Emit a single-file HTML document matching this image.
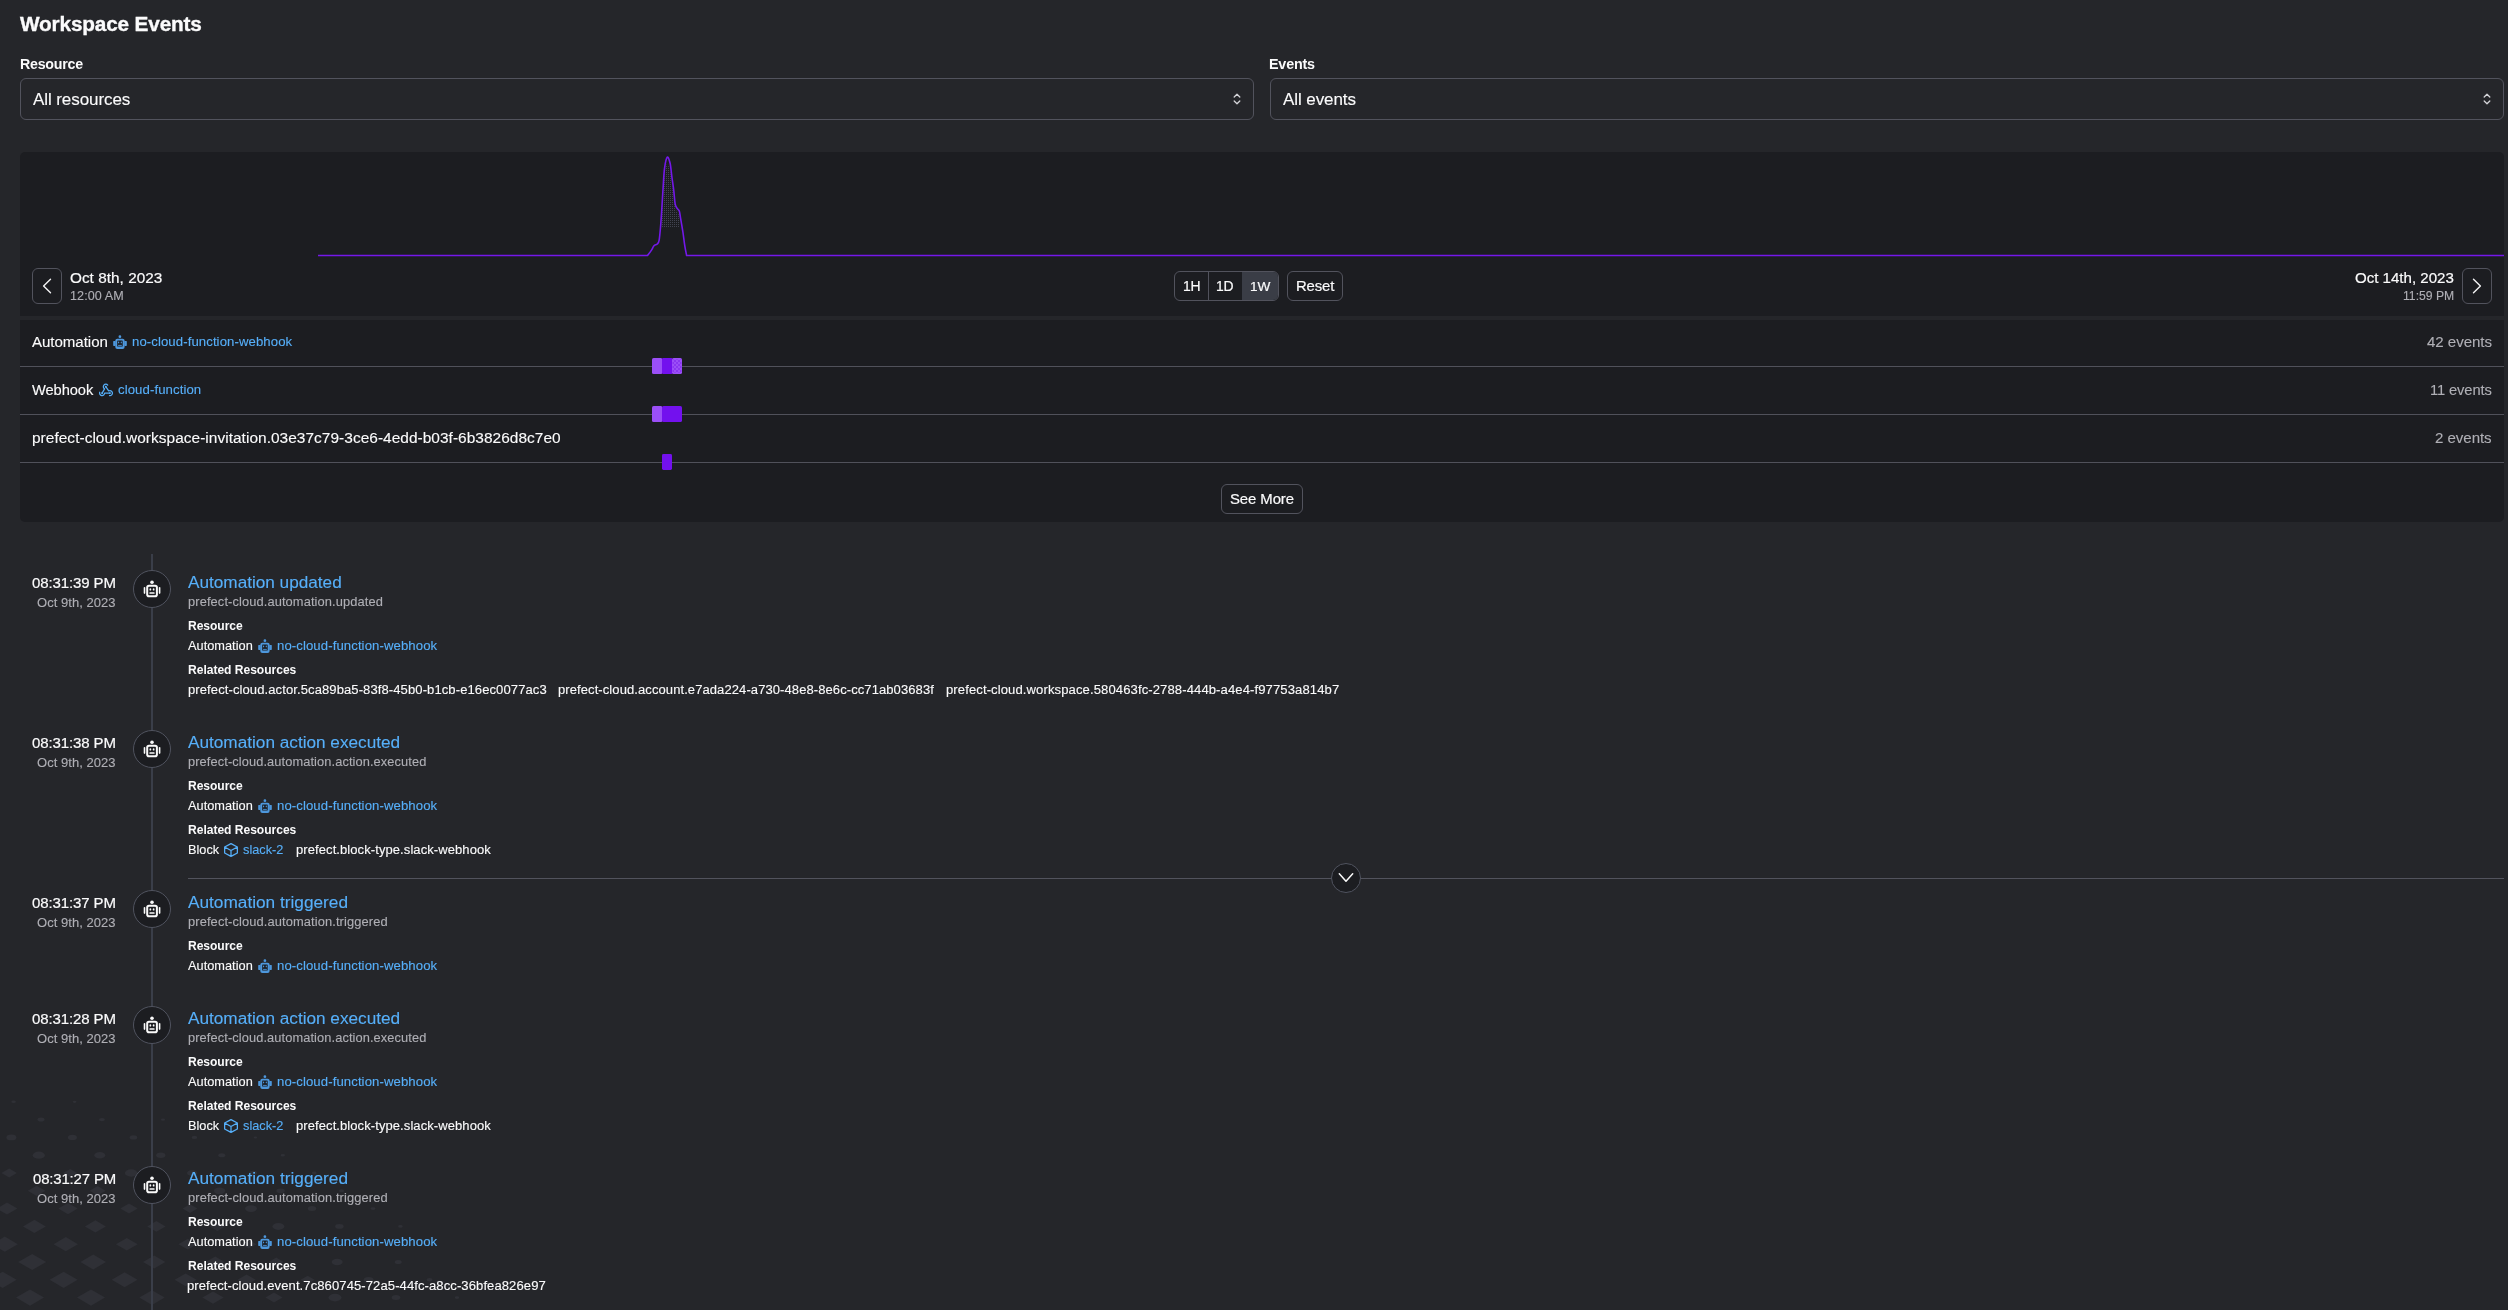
<!DOCTYPE html>
<html><head><meta charset="utf-8"><title>Workspace Events</title>
<style>
html,body{margin:0;padding:0;}
body{width:2508px;height:1310px;overflow:hidden;position:relative;background:#25262a;font-family:"Liberation Sans",sans-serif;}
.t{position:absolute;white-space:nowrap;will-change:transform;}
</style></head><body>
<svg style="position:absolute;left:0;top:0" width="900" height="1310" viewBox="0 0 900 1310"><g fill="#2f3036"><path d="M-45.0 1297.6L-31.0 1289.5L-17.0 1297.6L-31.0 1305.7Z"/><path d="M16.0 1297.6L30.0 1289.5L44.0 1297.6L30.0 1305.7Z"/><path d="M77.0 1297.6L91.0 1289.5L105.0 1297.6L91.0 1305.7Z"/><path d="M139.3 1297.6L152.0 1290.2L164.7 1297.6L152.0 1305.0Z"/><path d="M202.3 1297.6L213.0 1291.4L223.7 1297.6L213.0 1303.8Z"/><path d="M265.4 1297.6L274.0 1292.6L282.6 1297.6L274.0 1302.6Z"/><ellipse cx="335.0" cy="1297.6" rx="6.5" ry="3.8"/><ellipse cx="396.0" cy="1297.6" rx="4.3" ry="2.5"/><ellipse cx="457.0" cy="1297.6" rx="2.2" ry="1.3"/><path d="M-72.4 1279.8L-58.4 1271.7L-44.4 1279.8L-58.4 1287.9Z"/><path d="M-11.4 1279.8L2.6 1271.7L16.6 1279.8L2.6 1287.9Z"/><path d="M49.6 1279.8L63.6 1271.7L77.6 1279.8L63.6 1287.9Z"/><path d="M111.7 1279.8L124.6 1272.3L137.5 1279.8L124.6 1287.3Z"/><path d="M174.6 1279.8L185.6 1273.4L196.6 1279.8L185.6 1286.2Z"/><path d="M237.5 1279.8L246.6 1274.5L255.7 1279.8L246.6 1285.1Z"/><path d="M300.6 1279.8L307.6 1275.7L314.6 1279.8L307.6 1283.9Z"/><ellipse cx="368.6" cy="1279.8" rx="5.0" ry="2.9"/><ellipse cx="429.6" cy="1279.8" rx="2.9" ry="1.7"/><path d="M-42.8 1262.0L-28.8 1253.9L-14.8 1262.0L-28.8 1270.1Z"/><path d="M18.2 1262.0L32.2 1253.9L46.2 1262.0L32.2 1270.1Z"/><path d="M80.4 1262.0L93.2 1254.6L106.0 1262.0L93.2 1269.4Z"/><path d="M143.0 1262.0L154.2 1255.5L165.4 1262.0L154.2 1268.5Z"/><path d="M205.8 1262.0L215.2 1256.5L224.6 1262.0L215.2 1267.5Z"/><path d="M268.7 1262.0L276.2 1257.6L283.7 1262.0L276.2 1266.4Z"/><ellipse cx="337.2" cy="1262.0" rx="5.5" ry="3.2"/><ellipse cx="398.2" cy="1262.0" rx="3.5" ry="2.0"/><path d="M-69.5 1244.2L-56.2 1236.5L-42.9 1244.2L-56.2 1251.9Z"/><path d="M-8.2 1244.2L4.8 1236.6L17.8 1244.2L4.8 1251.8Z"/><path d="M53.6 1244.2L65.8 1237.1L78.0 1244.2L65.8 1251.3Z"/><path d="M115.9 1244.2L126.8 1237.9L137.7 1244.2L126.8 1250.5Z"/><path d="M178.4 1244.2L187.8 1238.8L197.2 1244.2L187.8 1249.6Z"/><path d="M241.1 1244.2L248.8 1239.8L256.5 1244.2L248.8 1248.6Z"/><ellipse cx="309.8" cy="1244.2" rx="5.8" ry="3.4"/><ellipse cx="370.8" cy="1244.2" rx="3.9" ry="2.3"/><ellipse cx="431.8" cy="1244.2" rx="1.9" ry="1.1"/><path d="M-38.5 1226.4L-26.6 1219.5L-14.7 1226.4L-26.6 1233.3Z"/><path d="M23.0 1226.4L34.4 1219.8L45.8 1226.4L34.4 1233.0Z"/><path d="M84.9 1226.4L95.4 1220.3L105.9 1226.4L95.4 1232.5Z"/><path d="M147.2 1226.4L156.4 1221.1L165.6 1226.4L156.4 1231.7Z"/><path d="M209.7 1226.4L217.4 1221.9L225.1 1226.4L217.4 1230.9Z"/><ellipse cx="278.4" cy="1226.4" rx="6.0" ry="3.5"/><ellipse cx="339.4" cy="1226.4" rx="4.2" ry="2.4"/><ellipse cx="400.4" cy="1226.4" rx="2.3" ry="1.3"/><path d="M-64.6 1208.6L-54.0 1202.5L-43.4 1208.6L-54.0 1214.7Z"/><path d="M-3.4 1208.6L7.0 1202.6L17.4 1208.6L7.0 1214.6Z"/><path d="M58.3 1208.6L68.0 1203.0L77.7 1208.6L68.0 1214.2Z"/><path d="M120.3 1208.6L129.0 1203.6L137.7 1208.6L129.0 1213.6Z"/><path d="M182.6 1208.6L190.0 1204.3L197.4 1208.6L190.0 1212.9Z"/><ellipse cx="251.0" cy="1208.6" rx="5.9" ry="3.4"/><ellipse cx="312.0" cy="1208.6" rx="4.2" ry="2.5"/><ellipse cx="373.0" cy="1208.6" rx="2.5" ry="1.4"/><path d="M-33.6 1190.8L-24.4 1185.5L-15.2 1190.8L-24.4 1196.1Z"/><path d="M27.8 1190.8L36.6 1185.7L45.4 1190.8L36.6 1195.9Z"/><path d="M89.6 1190.8L97.6 1186.1L105.6 1190.8L97.6 1195.5Z"/><path d="M151.6 1190.8L158.6 1186.7L165.6 1190.8L158.6 1194.9Z"/><ellipse cx="219.6" cy="1190.8" rx="5.7" ry="3.3"/><ellipse cx="280.6" cy="1190.8" rx="4.2" ry="2.4"/><ellipse cx="341.6" cy="1190.8" rx="2.6" ry="1.5"/><path d="M-59.7 1173.0L-51.8 1168.4L-43.9 1173.0L-51.8 1177.6Z"/><path d="M1.5 1173.0L9.2 1168.5L16.9 1173.0L9.2 1177.5Z"/><path d="M63.1 1173.0L70.2 1168.9L77.3 1173.0L70.2 1177.1Z"/><ellipse cx="131.2" cy="1173.0" rx="6.3" ry="3.7"/><ellipse cx="192.2" cy="1173.0" rx="5.2" ry="3.0"/><ellipse cx="253.2" cy="1173.0" rx="3.9" ry="2.2"/><ellipse cx="314.2" cy="1173.0" rx="2.4" ry="1.4"/><ellipse cx="-22.2" cy="1155.2" rx="6.5" ry="3.7"/><ellipse cx="38.8" cy="1155.2" rx="6.1" ry="3.6"/><ellipse cx="99.8" cy="1155.2" rx="5.5" ry="3.2"/><ellipse cx="160.8" cy="1155.2" rx="4.6" ry="2.7"/><ellipse cx="221.8" cy="1155.2" rx="3.5" ry="2.0"/><ellipse cx="282.8" cy="1155.2" rx="2.2" ry="1.2"/><ellipse cx="-49.6" cy="1137.4" rx="5.1" ry="3.0"/><ellipse cx="11.4" cy="1137.4" rx="5.0" ry="2.9"/><ellipse cx="72.4" cy="1137.4" rx="4.5" ry="2.6"/><ellipse cx="133.4" cy="1137.4" rx="3.8" ry="2.2"/><ellipse cx="194.4" cy="1137.4" rx="2.8" ry="1.6"/><ellipse cx="255.4" cy="1137.4" rx="1.7" ry="1.0"/><ellipse cx="-20.0" cy="1119.6" rx="3.7" ry="2.2"/><ellipse cx="41.0" cy="1119.6" rx="3.5" ry="2.0"/><ellipse cx="102.0" cy="1119.6" rx="2.9" ry="1.7"/><ellipse cx="163.0" cy="1119.6" rx="2.1" ry="1.2"/><ellipse cx="-47.4" cy="1101.8" rx="2.4" ry="1.4"/><ellipse cx="13.6" cy="1101.8" rx="2.3" ry="1.3"/><ellipse cx="74.6" cy="1101.8" rx="1.9" ry="1.1"/></g></svg>
<div class="t" style="left:20.00px;top:10px;font-size:20.76px;line-height:27px;letter-spacing:-0.153px;color:#fbfbfc;font-weight:700;-webkit-text-stroke:0.35px #fbfbfc;">Workspace Events</div>
<div class="t" style="left:19.68px;top:55px;font-size:14.22px;line-height:19px;letter-spacing:-0.246px;color:#fbfbfc;font-weight:700;">Resource</div>
<div class="t" style="left:1269.47px;top:55px;font-size:14.36px;line-height:19px;letter-spacing:-0.207px;color:#fbfbfc;font-weight:700;">Events</div>
<div style="position:absolute;left:20px;top:78px;width:1234px;height:42px;box-sizing:border-box;border:1px solid #52535d;border-radius:6px;"></div>
<div style="position:absolute;left:1270px;top:78px;width:1234px;height:42px;box-sizing:border-box;border:1px solid #52535d;border-radius:6px;"></div>
<div class="t" style="left:33.10px;top:88px;font-size:17.02px;line-height:23px;letter-spacing:-0.088px;color:#fbfbfc;-webkit-text-stroke:0.12px #fbfbfc;">All resources</div>
<div class="t" style="left:1283.20px;top:88px;font-size:17.03px;line-height:23px;letter-spacing:-0.084px;color:#fbfbfc;-webkit-text-stroke:0.12px #fbfbfc;">All events</div>
<svg style="position:absolute;left:1233px;top:93px;" width="8" height="12" viewBox="0 0 8 12" preserveAspectRatio="none"><path d="M1.2 4 L4 1.2 L6.8 4 M1.2 8 L4 10.8 L6.8 8" fill="none" stroke="#d4d4d8" stroke-width="1.3" stroke-linecap="round" stroke-linejoin="round"/></svg>
<svg style="position:absolute;left:2483px;top:93px;" width="8" height="12" viewBox="0 0 8 12" preserveAspectRatio="none"><path d="M1.2 4 L4 1.2 L6.8 4 M1.2 8 L4 10.8 L6.8 8" fill="none" stroke="#d4d4d8" stroke-width="1.3" stroke-linecap="round" stroke-linejoin="round"/></svg>
<div style="position:absolute;left:20px;top:152px;width:2484px;height:164px;background:#1c1d21;border-radius:5px 5px 0 0;"></div>
<div style="position:absolute;left:20px;top:320px;width:2484px;height:202px;background:#1c1d21;border-radius:0 0 5px 5px;"></div>
<svg style="position:absolute;left:0;top:0" width="2508" height="320" viewBox="0 0 2508 320">
<defs><pattern id="dots" width="2" height="2" patternUnits="userSpaceOnUse"><rect x="0" y="0" width="1" height="1" fill="#4b4e5c"/></pattern></defs>
<path d="M661 227 L662.5 200 L664.5 172 L667.3 162 L670.5 172 L673.5 195 L676 210 L679 215 L680 227 Z" fill="url(#dots)" opacity="0.8"/>
<path d="M318 255.5 L647.6 255.5  C648.22 254.65 650.23 252.02 651.30 250.40 C652.37 248.78 653.00 246.87 654.00 245.80 C655.00 244.73 656.45 244.92 657.30 244.00 C658.15 243.08 658.57 243.05 659.10 240.30 C659.63 237.55 660.05 232.70 660.50 227.50 C660.95 222.30 661.35 215.98 661.80 209.10 C662.25 202.22 662.73 193.07 663.20 186.20 C663.67 179.33 663.92 172.73 664.60 167.90 C665.28 163.07 666.38 157.97 667.30 157.20 C668.22 156.43 669.33 159.98 670.10 163.30 C670.87 166.62 671.28 172.52 671.90 177.10 C672.52 181.68 673.27 186.38 673.80 190.80 C674.33 195.22 674.57 200.70 675.10 203.60 C675.63 206.50 676.30 206.97 677.00 208.20 C677.70 209.43 678.70 209.32 679.30 211.00 C679.90 212.68 680.00 214.80 680.60 218.30 C681.20 221.80 682.20 227.42 682.90 232.00 C683.60 236.58 684.18 241.88 684.80 245.80 C685.42 249.72 686.30 253.88 686.60 255.50 L2504 255.5" fill="none" stroke="#7418ea" stroke-width="1.6" stroke-linejoin="round"/>
</svg>
<div style="position:absolute;left:32px;top:268px;width:30px;height:36px;box-sizing:border-box;border:1px solid #52535d;border-radius:6px;"></div>
<div style="position:absolute;left:2462px;top:268px;width:30px;height:36px;box-sizing:border-box;border:1px solid #52535d;border-radius:6px;"></div>
<svg style="position:absolute;left:42px;top:278px;" width="10" height="16" viewBox="0 0 10 16" preserveAspectRatio="none"><path d="M8.5 1.3 L1.6 8 L8.5 14.7" fill="none" stroke="#f4f4f5" stroke-width="1.4" stroke-linecap="round" stroke-linejoin="round"/></svg>
<svg style="position:absolute;left:2472px;top:278px;" width="10" height="16" viewBox="0 0 10 16" preserveAspectRatio="none"><path d="M1.5 1.3 L8.4 8 L1.5 14.7" fill="none" stroke="#f4f4f5" stroke-width="1.4" stroke-linecap="round" stroke-linejoin="round"/></svg>
<div class="t" style="left:69.81px;top:268px;font-size:15.3px;line-height:20px;letter-spacing:0.039px;color:#fbfbfc;-webkit-text-stroke:0.2px #fbfbfc;">Oct 8th, 2023</div>
<div class="t" style="left:69.56px;top:288px;font-size:12.58px;line-height:17px;letter-spacing:0.095px;color:#afafb5;-webkit-text-stroke:0.12px #afafb5;">12:00 AM</div>
<div class="t" style="left:2355.00px;top:268px;font-size:15.08px;line-height:20px;letter-spacing:-0.008px;color:#fbfbfc;-webkit-text-stroke:0.2px #fbfbfc;">Oct 14th, 2023</div>
<div class="t" style="left:2402.91px;top:288px;font-size:12.19px;line-height:16px;letter-spacing:-0.004px;color:#afafb5;-webkit-text-stroke:0.12px #afafb5;">11:59 PM</div>
<div style="position:absolute;left:1174px;top:271px;width:105px;height:30px;box-sizing:border-box;border:1px solid #52535d;border-radius:6px;overflow:hidden;"></div>
<div style="position:absolute;left:1242px;top:272px;width:36px;height:28px;background:#3a3d46;border-radius:0 5px 5px 0;"></div>
<div style="position:absolute;left:1208px;top:272px;width:1px;height:28px;background:#52535d;"></div>
<div class="t" style="left:1182.56px;top:277px;font-size:13.9px;line-height:19px;letter-spacing:-0.15px;color:#fbfbfc;-webkit-text-stroke:0.2px #fbfbfc;">1H</div>
<div class="t" style="left:1216.26px;top:277px;font-size:13.88px;line-height:19px;letter-spacing:-0.15px;color:#fbfbfc;-webkit-text-stroke:0.2px #fbfbfc;">1D</div>
<div class="t" style="left:1249.58px;top:278px;font-size:13.64px;line-height:18px;letter-spacing:-0.15px;color:#fbfbfc;-webkit-text-stroke:0.2px #fbfbfc;">1W</div>
<div style="position:absolute;left:1287px;top:271px;width:56px;height:30px;box-sizing:border-box;border:1px solid #52535d;border-radius:6px;"></div>
<div class="t" style="left:1295.61px;top:276px;font-size:14.89px;line-height:20px;letter-spacing:-0.14px;color:#fbfbfc;-webkit-text-stroke:0.2px #fbfbfc;">Reset</div>
<div style="position:absolute;left:20px;top:366px;width:2484px;height:1px;background:#50515a;"></div>
<div style="position:absolute;left:20px;top:414px;width:2484px;height:1px;background:#50515a;"></div>
<div style="position:absolute;left:20px;top:462px;width:2484px;height:1px;background:#50515a;"></div>
<div class="t" style="left:32.20px;top:332px;font-size:15.08px;line-height:20px;letter-spacing:-0.042px;color:#fbfbfc;-webkit-text-stroke:0.12px #fbfbfc;">Automation</div>
<svg style="position:absolute;left:113px;top:335px;" width="14" height="14" viewBox="0 0 14 14" preserveAspectRatio="none"><circle cx="6.9" cy="1.7" r="1.35" fill="#4d97dc"/><rect x="2.3" y="3.8" width="9.3" height="10.2" rx="2" fill="#4d97dc"/><rect x="0.2" y="5.9" width="2.4" height="5" rx="0.6" fill="#4d97dc"/><rect x="11.3" y="5.9" width="2.5" height="5" rx="0.6" fill="#4d97dc"/><rect x="4.2" y="5.4" width="5.5" height="6.2" rx="0.5" fill="#1c1d21"/><ellipse cx="5.6" cy="7.4" rx="0.6" ry="0.85" fill="#4d97dc"/><ellipse cx="8.3" cy="7.4" rx="0.6" ry="0.85" fill="#4d97dc"/><rect x="5.1" y="9.9" width="3.7" height="0.9" fill="#4d97dc"/></svg>
<div class="t" style="left:131.64px;top:333px;font-size:13.18px;line-height:18px;letter-spacing:0.082px;color:#56aff9;-webkit-text-stroke:0.12px #56aff9;">no-cloud-function-webhook</div>
<div class="t" style="left:2426.98px;top:332px;font-size:15.08px;line-height:20px;letter-spacing:-0.043px;color:#afafb5;-webkit-text-stroke:0.12px #afafb5;">42 events</div>
<div class="t" style="left:32.20px;top:380px;font-size:14.7px;line-height:20px;letter-spacing:-0.083px;color:#fbfbfc;-webkit-text-stroke:0.12px #fbfbfc;">Webhook</div>
<svg style="position:absolute;left:99px;top:383px;" width="14" height="14" viewBox="0 0 14 14" preserveAspectRatio="none"><path d="M8.72 2.09A2.5 2.5 0 1 0 5.55 5.87L3.10 10.10M0.75 9.24A2.5 2.5 0 1 0 5.60 10.10L10.90 10.10M10.47 12.56A2.5 2.5 0 1 0 9.65 7.93L6.80 3.70" fill="none" stroke="#56aff9" stroke-width="1.25" stroke-linecap="round" stroke-linejoin="round"/><g fill="#56aff9"><circle cx="6.8" cy="3.7" r="0.95"/><circle cx="3.1" cy="10.1" r="0.95"/><circle cx="10.9" cy="10.1" r="0.95"/></g></svg>
<div class="t" style="left:118.07px;top:381px;font-size:13.19px;line-height:18px;letter-spacing:0.08px;color:#56aff9;-webkit-text-stroke:0.12px #56aff9;">cloud-function</div>
<div class="t" style="left:2430.19px;top:380px;font-size:14.73px;line-height:20px;letter-spacing:-0.119px;color:#afafb5;-webkit-text-stroke:0.12px #afafb5;">11 events</div>
<div class="t" style="left:31.77px;top:427px;font-size:15.44px;line-height:21px;letter-spacing:0.037px;color:#fbfbfc;-webkit-text-stroke:0.12px #fbfbfc;">prefect-cloud.workspace-invitation.03e37c79-3ce6-4edd-b03f-6b3826d8c7e0</div>
<div class="t" style="left:2435.36px;top:428px;font-size:15.07px;line-height:20px;letter-spacing:-0.043px;color:#afafb5;-webkit-text-stroke:0.12px #afafb5;">2 events</div>
<svg style="position:absolute;left:650px;top:356px" width="34" height="116" viewBox="0 0 34 116">
<defs><pattern id="bdots" width="4" height="4" patternUnits="userSpaceOnUse"><circle cx="1" cy="1" r="0.75" fill="#7011e8"/><circle cx="3" cy="3" r="0.75" fill="#7011e8"/></pattern></defs>
<rect x="2" y="2" width="10.5" height="16" rx="1.6" fill="#9b4ff7"/>
<rect x="12" y="2" width="10.5" height="16" rx="1.2" fill="#7311ee"/>
<rect x="22" y="2" width="10" height="16" rx="1.6" fill="#9b4ff7"/>
<rect x="22.5" y="3.5" width="9" height="13" fill="url(#bdots)"/>
<rect x="2" y="50" width="10.5" height="16" rx="1.6" fill="#9b4ff7"/>
<rect x="12" y="50" width="20" height="16" rx="1.6" fill="#7311ee"/>
<rect x="12" y="98" width="10" height="16" rx="1.4" fill="#7311ee"/>
</svg>
<div style="position:absolute;left:1221px;top:484px;width:82px;height:30px;box-sizing:border-box;border:1px solid #52535d;border-radius:6px;"></div>
<div class="t" style="left:1230.13px;top:489px;font-size:14.92px;line-height:20px;letter-spacing:-0.088px;color:#fbfbfc;-webkit-text-stroke:0.2px #fbfbfc;">See More</div>
<div style="position:absolute;left:151px;top:554px;width:2px;height:756px;background:#3a3e49;"></div>
<div class="t" style="left:32.29px;top:573px;font-size:15.03px;line-height:20px;letter-spacing:-0.124px;color:#fbfbfc;-webkit-text-stroke:0.2px #fbfbfc;">08:31:39 PM</div>
<div class="t" style="left:37.04px;top:594px;font-size:13.0px;line-height:17px;letter-spacing:0.045px;color:#afafb5;-webkit-text-stroke:0.12px #afafb5;">Oct 9th, 2023</div>
<div style="position:absolute;left:133px;top:570.0px;width:38px;height:38px;box-sizing:border-box;background:#1c1d21;border:1px solid #50535f;border-radius:50%;"></div>
<svg style="position:absolute;left:140px;top:577.0px;" width="24" height="24" viewBox="0 0 24 24" preserveAspectRatio="none"><circle cx="12" cy="5.3" r="1.8" fill="#fafafa"/><rect x="7.2" y="8.7" width="9.7" height="10.5" rx="1.8" fill="none" stroke="#fafafa" stroke-width="2"/><rect x="3.7" y="9.9" width="1.6" height="7" rx="0.8" fill="#fafafa"/><rect x="18.8" y="9.9" width="1.6" height="7" rx="0.8" fill="#fafafa"/><ellipse cx="10.35" cy="12.4" rx="0.85" ry="1.2" fill="#fafafa"/><ellipse cx="13.65" cy="12.4" rx="0.85" ry="1.2" fill="#fafafa"/><rect x="9.4" y="15.2" width="5.2" height="1.5" rx="0.5" fill="#fafafa"/></svg>
<div class="t" style="left:188.40px;top:571px;font-size:17.22px;line-height:23px;letter-spacing:-0.017px;color:#56aff9;-webkit-text-stroke:0.12px #56aff9;">Automation updated</div>
<div class="t" style="left:187.63px;top:593px;font-size:12.87px;line-height:17px;letter-spacing:0.106px;color:#afafb5;-webkit-text-stroke:0.12px #afafb5;">prefect-cloud.automation.updated</div>
<div class="t" style="left:187.71px;top:618px;font-size:12.09px;line-height:16px;letter-spacing:-0.051px;color:#fbfbfc;font-weight:700;">Resource</div>
<div class="t" style="left:188.40px;top:637px;font-size:12.76px;line-height:17px;letter-spacing:0.027px;color:#fbfbfc;-webkit-text-stroke:0.12px #fbfbfc;">Automation</div>
<svg style="position:absolute;left:258px;top:639.1px;" width="14" height="14" viewBox="0 0 14 14" preserveAspectRatio="none"><circle cx="6.9" cy="1.7" r="1.35" fill="#4d97dc"/><rect x="2.3" y="3.8" width="9.3" height="10.2" rx="2" fill="#4d97dc"/><rect x="0.2" y="5.9" width="2.4" height="5" rx="0.6" fill="#4d97dc"/><rect x="11.3" y="5.9" width="2.5" height="5" rx="0.6" fill="#4d97dc"/><rect x="4.2" y="5.4" width="5.5" height="6.2" rx="0.5" fill="#1c1d21"/><ellipse cx="5.6" cy="7.4" rx="0.6" ry="0.85" fill="#4d97dc"/><ellipse cx="8.3" cy="7.4" rx="0.6" ry="0.85" fill="#4d97dc"/><rect x="5.1" y="9.9" width="3.7" height="0.9" fill="#4d97dc"/></svg>
<div class="t" style="left:276.94px;top:637px;font-size:13.18px;line-height:18px;letter-spacing:0.082px;color:#56aff9;-webkit-text-stroke:0.12px #56aff9;">no-cloud-function-webhook</div>
<div class="t" style="left:187.71px;top:662px;font-size:12.09px;line-height:16px;letter-spacing:-0.028px;color:#fbfbfc;font-weight:700;">Related Resources</div>
<div class="t" style="left:187.62px;top:681px;font-size:13.05px;line-height:17px;letter-spacing:0.086px;color:#fbfbfc;-webkit-text-stroke:0.12px #fbfbfc;">prefect-cloud.actor.5ca89ba5-83f8-45b0-b1cb-e16ec0077ac3</div>
<div class="t" style="left:557.82px;top:681px;font-size:13.03px;line-height:17px;letter-spacing:0.081px;color:#fbfbfc;-webkit-text-stroke:0.12px #fbfbfc;">prefect-cloud.account.e7ada224-a730-48e8-8e6c-cc71ab03683f</div>
<div class="t" style="left:946.21px;top:681px;font-size:13.09px;line-height:18px;letter-spacing:0.096px;color:#fbfbfc;-webkit-text-stroke:0.12px #fbfbfc;">prefect-cloud.workspace.580463fc-2788-444b-a4e4-f97753a814b7</div>
<div class="t" style="left:32.29px;top:733px;font-size:15.03px;line-height:20px;letter-spacing:-0.124px;color:#fbfbfc;-webkit-text-stroke:0.2px #fbfbfc;">08:31:38 PM</div>
<div class="t" style="left:37.04px;top:754px;font-size:13.0px;line-height:17px;letter-spacing:0.045px;color:#afafb5;-webkit-text-stroke:0.12px #afafb5;">Oct 9th, 2023</div>
<div style="position:absolute;left:133px;top:730.0px;width:38px;height:38px;box-sizing:border-box;background:#1c1d21;border:1px solid #50535f;border-radius:50%;"></div>
<svg style="position:absolute;left:140px;top:737.0px;" width="24" height="24" viewBox="0 0 24 24" preserveAspectRatio="none"><circle cx="12" cy="5.3" r="1.8" fill="#fafafa"/><rect x="7.2" y="8.7" width="9.7" height="10.5" rx="1.8" fill="none" stroke="#fafafa" stroke-width="2"/><rect x="3.7" y="9.9" width="1.6" height="7" rx="0.8" fill="#fafafa"/><rect x="18.8" y="9.9" width="1.6" height="7" rx="0.8" fill="#fafafa"/><ellipse cx="10.35" cy="12.4" rx="0.85" ry="1.2" fill="#fafafa"/><ellipse cx="13.65" cy="12.4" rx="0.85" ry="1.2" fill="#fafafa"/><rect x="9.4" y="15.2" width="5.2" height="1.5" rx="0.5" fill="#fafafa"/></svg>
<div class="t" style="left:188.40px;top:731px;font-size:17.23px;line-height:23px;letter-spacing:-0.014px;color:#56aff9;-webkit-text-stroke:0.12px #56aff9;">Automation action executed</div>
<div class="t" style="left:187.63px;top:753px;font-size:12.83px;line-height:17px;letter-spacing:0.096px;color:#afafb5;-webkit-text-stroke:0.12px #afafb5;">prefect-cloud.automation.action.executed</div>
<div class="t" style="left:187.71px;top:778px;font-size:12.09px;line-height:16px;letter-spacing:-0.051px;color:#fbfbfc;font-weight:700;">Resource</div>
<div class="t" style="left:188.40px;top:797px;font-size:12.76px;line-height:17px;letter-spacing:0.027px;color:#fbfbfc;-webkit-text-stroke:0.12px #fbfbfc;">Automation</div>
<svg style="position:absolute;left:258px;top:799.1px;" width="14" height="14" viewBox="0 0 14 14" preserveAspectRatio="none"><circle cx="6.9" cy="1.7" r="1.35" fill="#4d97dc"/><rect x="2.3" y="3.8" width="9.3" height="10.2" rx="2" fill="#4d97dc"/><rect x="0.2" y="5.9" width="2.4" height="5" rx="0.6" fill="#4d97dc"/><rect x="11.3" y="5.9" width="2.5" height="5" rx="0.6" fill="#4d97dc"/><rect x="4.2" y="5.4" width="5.5" height="6.2" rx="0.5" fill="#1c1d21"/><ellipse cx="5.6" cy="7.4" rx="0.6" ry="0.85" fill="#4d97dc"/><ellipse cx="8.3" cy="7.4" rx="0.6" ry="0.85" fill="#4d97dc"/><rect x="5.1" y="9.9" width="3.7" height="0.9" fill="#4d97dc"/></svg>
<div class="t" style="left:276.94px;top:797px;font-size:13.18px;line-height:18px;letter-spacing:0.082px;color:#56aff9;-webkit-text-stroke:0.12px #56aff9;">no-cloud-function-webhook</div>
<div class="t" style="left:187.71px;top:822px;font-size:12.09px;line-height:16px;letter-spacing:-0.028px;color:#fbfbfc;font-weight:700;">Related Resources</div>
<div class="t" style="left:187.78px;top:841px;font-size:12.71px;line-height:17px;letter-spacing:0.017px;color:#fbfbfc;-webkit-text-stroke:0.12px #fbfbfc;">Block</div>
<svg style="position:absolute;left:224px;top:842.5px;overflow:visible" width="14" height="14" viewBox="2.1 1.3 19.8 21.4" preserveAspectRatio="none"><g fill="none" stroke="#56aff9" stroke-width="1.8" stroke-linecap="round" stroke-linejoin="round"><path d="M21 7.5l-9-5.25L3 7.5m18 0l-9 5.25m9-5.25v9l-9 5.25M3 7.5l9 5.25M3 7.5v9l9 5.25m0-9v9"/></g></svg>
<div class="t" style="left:243.28px;top:841px;font-size:12.72px;line-height:17px;letter-spacing:0.017px;color:#56aff9;-webkit-text-stroke:0.12px #56aff9;">slack-2</div>
<div class="t" style="left:295.72px;top:841px;font-size:13.02px;line-height:17px;letter-spacing:0.077px;color:#fbfbfc;-webkit-text-stroke:0.12px #fbfbfc;">prefect.block-type.slack-webhook</div>
<div class="t" style="left:32.29px;top:893px;font-size:15.03px;line-height:20px;letter-spacing:-0.124px;color:#fbfbfc;-webkit-text-stroke:0.2px #fbfbfc;">08:31:37 PM</div>
<div class="t" style="left:37.04px;top:914px;font-size:13.0px;line-height:17px;letter-spacing:0.045px;color:#afafb5;-webkit-text-stroke:0.12px #afafb5;">Oct 9th, 2023</div>
<div style="position:absolute;left:133px;top:890.0px;width:38px;height:38px;box-sizing:border-box;background:#1c1d21;border:1px solid #50535f;border-radius:50%;"></div>
<svg style="position:absolute;left:140px;top:897.0px;" width="24" height="24" viewBox="0 0 24 24" preserveAspectRatio="none"><circle cx="12" cy="5.3" r="1.8" fill="#fafafa"/><rect x="7.2" y="8.7" width="9.7" height="10.5" rx="1.8" fill="none" stroke="#fafafa" stroke-width="2"/><rect x="3.7" y="9.9" width="1.6" height="7" rx="0.8" fill="#fafafa"/><rect x="18.8" y="9.9" width="1.6" height="7" rx="0.8" fill="#fafafa"/><ellipse cx="10.35" cy="12.4" rx="0.85" ry="1.2" fill="#fafafa"/><ellipse cx="13.65" cy="12.4" rx="0.85" ry="1.2" fill="#fafafa"/><rect x="9.4" y="15.2" width="5.2" height="1.5" rx="0.5" fill="#fafafa"/></svg>
<div class="t" style="left:188.40px;top:891px;font-size:17.26px;line-height:23px;letter-spacing:-0.008px;color:#56aff9;-webkit-text-stroke:0.12px #56aff9;">Automation triggered</div>
<div class="t" style="left:187.63px;top:913px;font-size:12.89px;line-height:17px;letter-spacing:0.106px;color:#afafb5;-webkit-text-stroke:0.12px #afafb5;">prefect-cloud.automation.triggered</div>
<div class="t" style="left:187.71px;top:938px;font-size:12.09px;line-height:16px;letter-spacing:-0.051px;color:#fbfbfc;font-weight:700;">Resource</div>
<div class="t" style="left:188.40px;top:957px;font-size:12.76px;line-height:17px;letter-spacing:0.027px;color:#fbfbfc;-webkit-text-stroke:0.12px #fbfbfc;">Automation</div>
<svg style="position:absolute;left:258px;top:959.1px;" width="14" height="14" viewBox="0 0 14 14" preserveAspectRatio="none"><circle cx="6.9" cy="1.7" r="1.35" fill="#4d97dc"/><rect x="2.3" y="3.8" width="9.3" height="10.2" rx="2" fill="#4d97dc"/><rect x="0.2" y="5.9" width="2.4" height="5" rx="0.6" fill="#4d97dc"/><rect x="11.3" y="5.9" width="2.5" height="5" rx="0.6" fill="#4d97dc"/><rect x="4.2" y="5.4" width="5.5" height="6.2" rx="0.5" fill="#1c1d21"/><ellipse cx="5.6" cy="7.4" rx="0.6" ry="0.85" fill="#4d97dc"/><ellipse cx="8.3" cy="7.4" rx="0.6" ry="0.85" fill="#4d97dc"/><rect x="5.1" y="9.9" width="3.7" height="0.9" fill="#4d97dc"/></svg>
<div class="t" style="left:276.94px;top:957px;font-size:13.18px;line-height:18px;letter-spacing:0.082px;color:#56aff9;-webkit-text-stroke:0.12px #56aff9;">no-cloud-function-webhook</div>
<div class="t" style="left:32.29px;top:1009px;font-size:15.03px;line-height:20px;letter-spacing:-0.124px;color:#fbfbfc;-webkit-text-stroke:0.2px #fbfbfc;">08:31:28 PM</div>
<div class="t" style="left:37.04px;top:1030px;font-size:13.0px;line-height:17px;letter-spacing:0.045px;color:#afafb5;-webkit-text-stroke:0.12px #afafb5;">Oct 9th, 2023</div>
<div style="position:absolute;left:133px;top:1006.0px;width:38px;height:38px;box-sizing:border-box;background:#1c1d21;border:1px solid #50535f;border-radius:50%;"></div>
<svg style="position:absolute;left:140px;top:1013.0px;" width="24" height="24" viewBox="0 0 24 24" preserveAspectRatio="none"><circle cx="12" cy="5.3" r="1.8" fill="#fafafa"/><rect x="7.2" y="8.7" width="9.7" height="10.5" rx="1.8" fill="none" stroke="#fafafa" stroke-width="2"/><rect x="3.7" y="9.9" width="1.6" height="7" rx="0.8" fill="#fafafa"/><rect x="18.8" y="9.9" width="1.6" height="7" rx="0.8" fill="#fafafa"/><ellipse cx="10.35" cy="12.4" rx="0.85" ry="1.2" fill="#fafafa"/><ellipse cx="13.65" cy="12.4" rx="0.85" ry="1.2" fill="#fafafa"/><rect x="9.4" y="15.2" width="5.2" height="1.5" rx="0.5" fill="#fafafa"/></svg>
<div class="t" style="left:188.40px;top:1007px;font-size:17.23px;line-height:23px;letter-spacing:-0.014px;color:#56aff9;-webkit-text-stroke:0.12px #56aff9;">Automation action executed</div>
<div class="t" style="left:187.63px;top:1029px;font-size:12.83px;line-height:17px;letter-spacing:0.096px;color:#afafb5;-webkit-text-stroke:0.12px #afafb5;">prefect-cloud.automation.action.executed</div>
<div class="t" style="left:187.71px;top:1054px;font-size:12.09px;line-height:16px;letter-spacing:-0.051px;color:#fbfbfc;font-weight:700;">Resource</div>
<div class="t" style="left:188.40px;top:1073px;font-size:12.76px;line-height:17px;letter-spacing:0.027px;color:#fbfbfc;-webkit-text-stroke:0.12px #fbfbfc;">Automation</div>
<svg style="position:absolute;left:258px;top:1075.1px;" width="14" height="14" viewBox="0 0 14 14" preserveAspectRatio="none"><circle cx="6.9" cy="1.7" r="1.35" fill="#4d97dc"/><rect x="2.3" y="3.8" width="9.3" height="10.2" rx="2" fill="#4d97dc"/><rect x="0.2" y="5.9" width="2.4" height="5" rx="0.6" fill="#4d97dc"/><rect x="11.3" y="5.9" width="2.5" height="5" rx="0.6" fill="#4d97dc"/><rect x="4.2" y="5.4" width="5.5" height="6.2" rx="0.5" fill="#1c1d21"/><ellipse cx="5.6" cy="7.4" rx="0.6" ry="0.85" fill="#4d97dc"/><ellipse cx="8.3" cy="7.4" rx="0.6" ry="0.85" fill="#4d97dc"/><rect x="5.1" y="9.9" width="3.7" height="0.9" fill="#4d97dc"/></svg>
<div class="t" style="left:276.94px;top:1073px;font-size:13.18px;line-height:18px;letter-spacing:0.082px;color:#56aff9;-webkit-text-stroke:0.12px #56aff9;">no-cloud-function-webhook</div>
<div class="t" style="left:187.71px;top:1098px;font-size:12.09px;line-height:16px;letter-spacing:-0.028px;color:#fbfbfc;font-weight:700;">Related Resources</div>
<div class="t" style="left:187.78px;top:1117px;font-size:12.71px;line-height:17px;letter-spacing:0.017px;color:#fbfbfc;-webkit-text-stroke:0.12px #fbfbfc;">Block</div>
<svg style="position:absolute;left:224px;top:1118.5px;overflow:visible" width="14" height="14" viewBox="2.1 1.3 19.8 21.4" preserveAspectRatio="none"><g fill="none" stroke="#56aff9" stroke-width="1.8" stroke-linecap="round" stroke-linejoin="round"><path d="M21 7.5l-9-5.25L3 7.5m18 0l-9 5.25m9-5.25v9l-9 5.25M3 7.5l9 5.25M3 7.5v9l9 5.25m0-9v9"/></g></svg>
<div class="t" style="left:243.28px;top:1117px;font-size:12.72px;line-height:17px;letter-spacing:0.017px;color:#56aff9;-webkit-text-stroke:0.12px #56aff9;">slack-2</div>
<div class="t" style="left:295.72px;top:1117px;font-size:13.02px;line-height:17px;letter-spacing:0.077px;color:#fbfbfc;-webkit-text-stroke:0.12px #fbfbfc;">prefect.block-type.slack-webhook</div>
<div class="t" style="left:33.09px;top:1169px;font-size:14.93px;line-height:20px;letter-spacing:-0.148px;color:#fbfbfc;-webkit-text-stroke:0.2px #fbfbfc;">08:31:27 PM</div>
<div class="t" style="left:37.04px;top:1190px;font-size:13.0px;line-height:17px;letter-spacing:0.045px;color:#afafb5;-webkit-text-stroke:0.12px #afafb5;">Oct 9th, 2023</div>
<div style="position:absolute;left:133px;top:1166.0px;width:38px;height:38px;box-sizing:border-box;background:#1c1d21;border:1px solid #50535f;border-radius:50%;"></div>
<svg style="position:absolute;left:140px;top:1173.0px;" width="24" height="24" viewBox="0 0 24 24" preserveAspectRatio="none"><circle cx="12" cy="5.3" r="1.8" fill="#fafafa"/><rect x="7.2" y="8.7" width="9.7" height="10.5" rx="1.8" fill="none" stroke="#fafafa" stroke-width="2"/><rect x="3.7" y="9.9" width="1.6" height="7" rx="0.8" fill="#fafafa"/><rect x="18.8" y="9.9" width="1.6" height="7" rx="0.8" fill="#fafafa"/><ellipse cx="10.35" cy="12.4" rx="0.85" ry="1.2" fill="#fafafa"/><ellipse cx="13.65" cy="12.4" rx="0.85" ry="1.2" fill="#fafafa"/><rect x="9.4" y="15.2" width="5.2" height="1.5" rx="0.5" fill="#fafafa"/></svg>
<div class="t" style="left:188.40px;top:1167px;font-size:17.26px;line-height:23px;letter-spacing:-0.008px;color:#56aff9;-webkit-text-stroke:0.12px #56aff9;">Automation triggered</div>
<div class="t" style="left:187.63px;top:1189px;font-size:12.89px;line-height:17px;letter-spacing:0.106px;color:#afafb5;-webkit-text-stroke:0.12px #afafb5;">prefect-cloud.automation.triggered</div>
<div class="t" style="left:187.71px;top:1214px;font-size:12.09px;line-height:16px;letter-spacing:-0.051px;color:#fbfbfc;font-weight:700;">Resource</div>
<div class="t" style="left:188.40px;top:1233px;font-size:12.76px;line-height:17px;letter-spacing:0.027px;color:#fbfbfc;-webkit-text-stroke:0.12px #fbfbfc;">Automation</div>
<svg style="position:absolute;left:258px;top:1235.1000000000001px;" width="14" height="14" viewBox="0 0 14 14" preserveAspectRatio="none"><circle cx="6.9" cy="1.7" r="1.35" fill="#4d97dc"/><rect x="2.3" y="3.8" width="9.3" height="10.2" rx="2" fill="#4d97dc"/><rect x="0.2" y="5.9" width="2.4" height="5" rx="0.6" fill="#4d97dc"/><rect x="11.3" y="5.9" width="2.5" height="5" rx="0.6" fill="#4d97dc"/><rect x="4.2" y="5.4" width="5.5" height="6.2" rx="0.5" fill="#1c1d21"/><ellipse cx="5.6" cy="7.4" rx="0.6" ry="0.85" fill="#4d97dc"/><ellipse cx="8.3" cy="7.4" rx="0.6" ry="0.85" fill="#4d97dc"/><rect x="5.1" y="9.9" width="3.7" height="0.9" fill="#4d97dc"/></svg>
<div class="t" style="left:276.94px;top:1233px;font-size:13.18px;line-height:18px;letter-spacing:0.082px;color:#56aff9;-webkit-text-stroke:0.12px #56aff9;">no-cloud-function-webhook</div>
<div class="t" style="left:187.71px;top:1258px;font-size:12.09px;line-height:16px;letter-spacing:-0.028px;color:#fbfbfc;font-weight:700;">Related Resources</div>
<div class="t" style="left:187.02px;top:1277px;font-size:13.06px;line-height:17px;letter-spacing:0.087px;color:#fbfbfc;-webkit-text-stroke:0.12px #fbfbfc;">prefect-cloud.event.7c860745-72a5-44fc-a8cc-36bfea826e97</div>
<div style="position:absolute;left:188px;top:878px;width:2316px;height:1px;background:#52535d;"></div>
<div style="position:absolute;left:1331px;top:863px;width:30px;height:30px;box-sizing:border-box;background:#1c1d21;border:1px solid #50535f;border-radius:50%;"></div>
<svg style="position:absolute;left:1338px;top:872px;" width="16" height="11" viewBox="0 0 16 11" preserveAspectRatio="none"><path d="M1.3 1.8 L8 9.3 L14.7 1.8" fill="none" stroke="#fafafa" stroke-width="1.5" stroke-linecap="round" stroke-linejoin="round"/></svg>
</body></html>
